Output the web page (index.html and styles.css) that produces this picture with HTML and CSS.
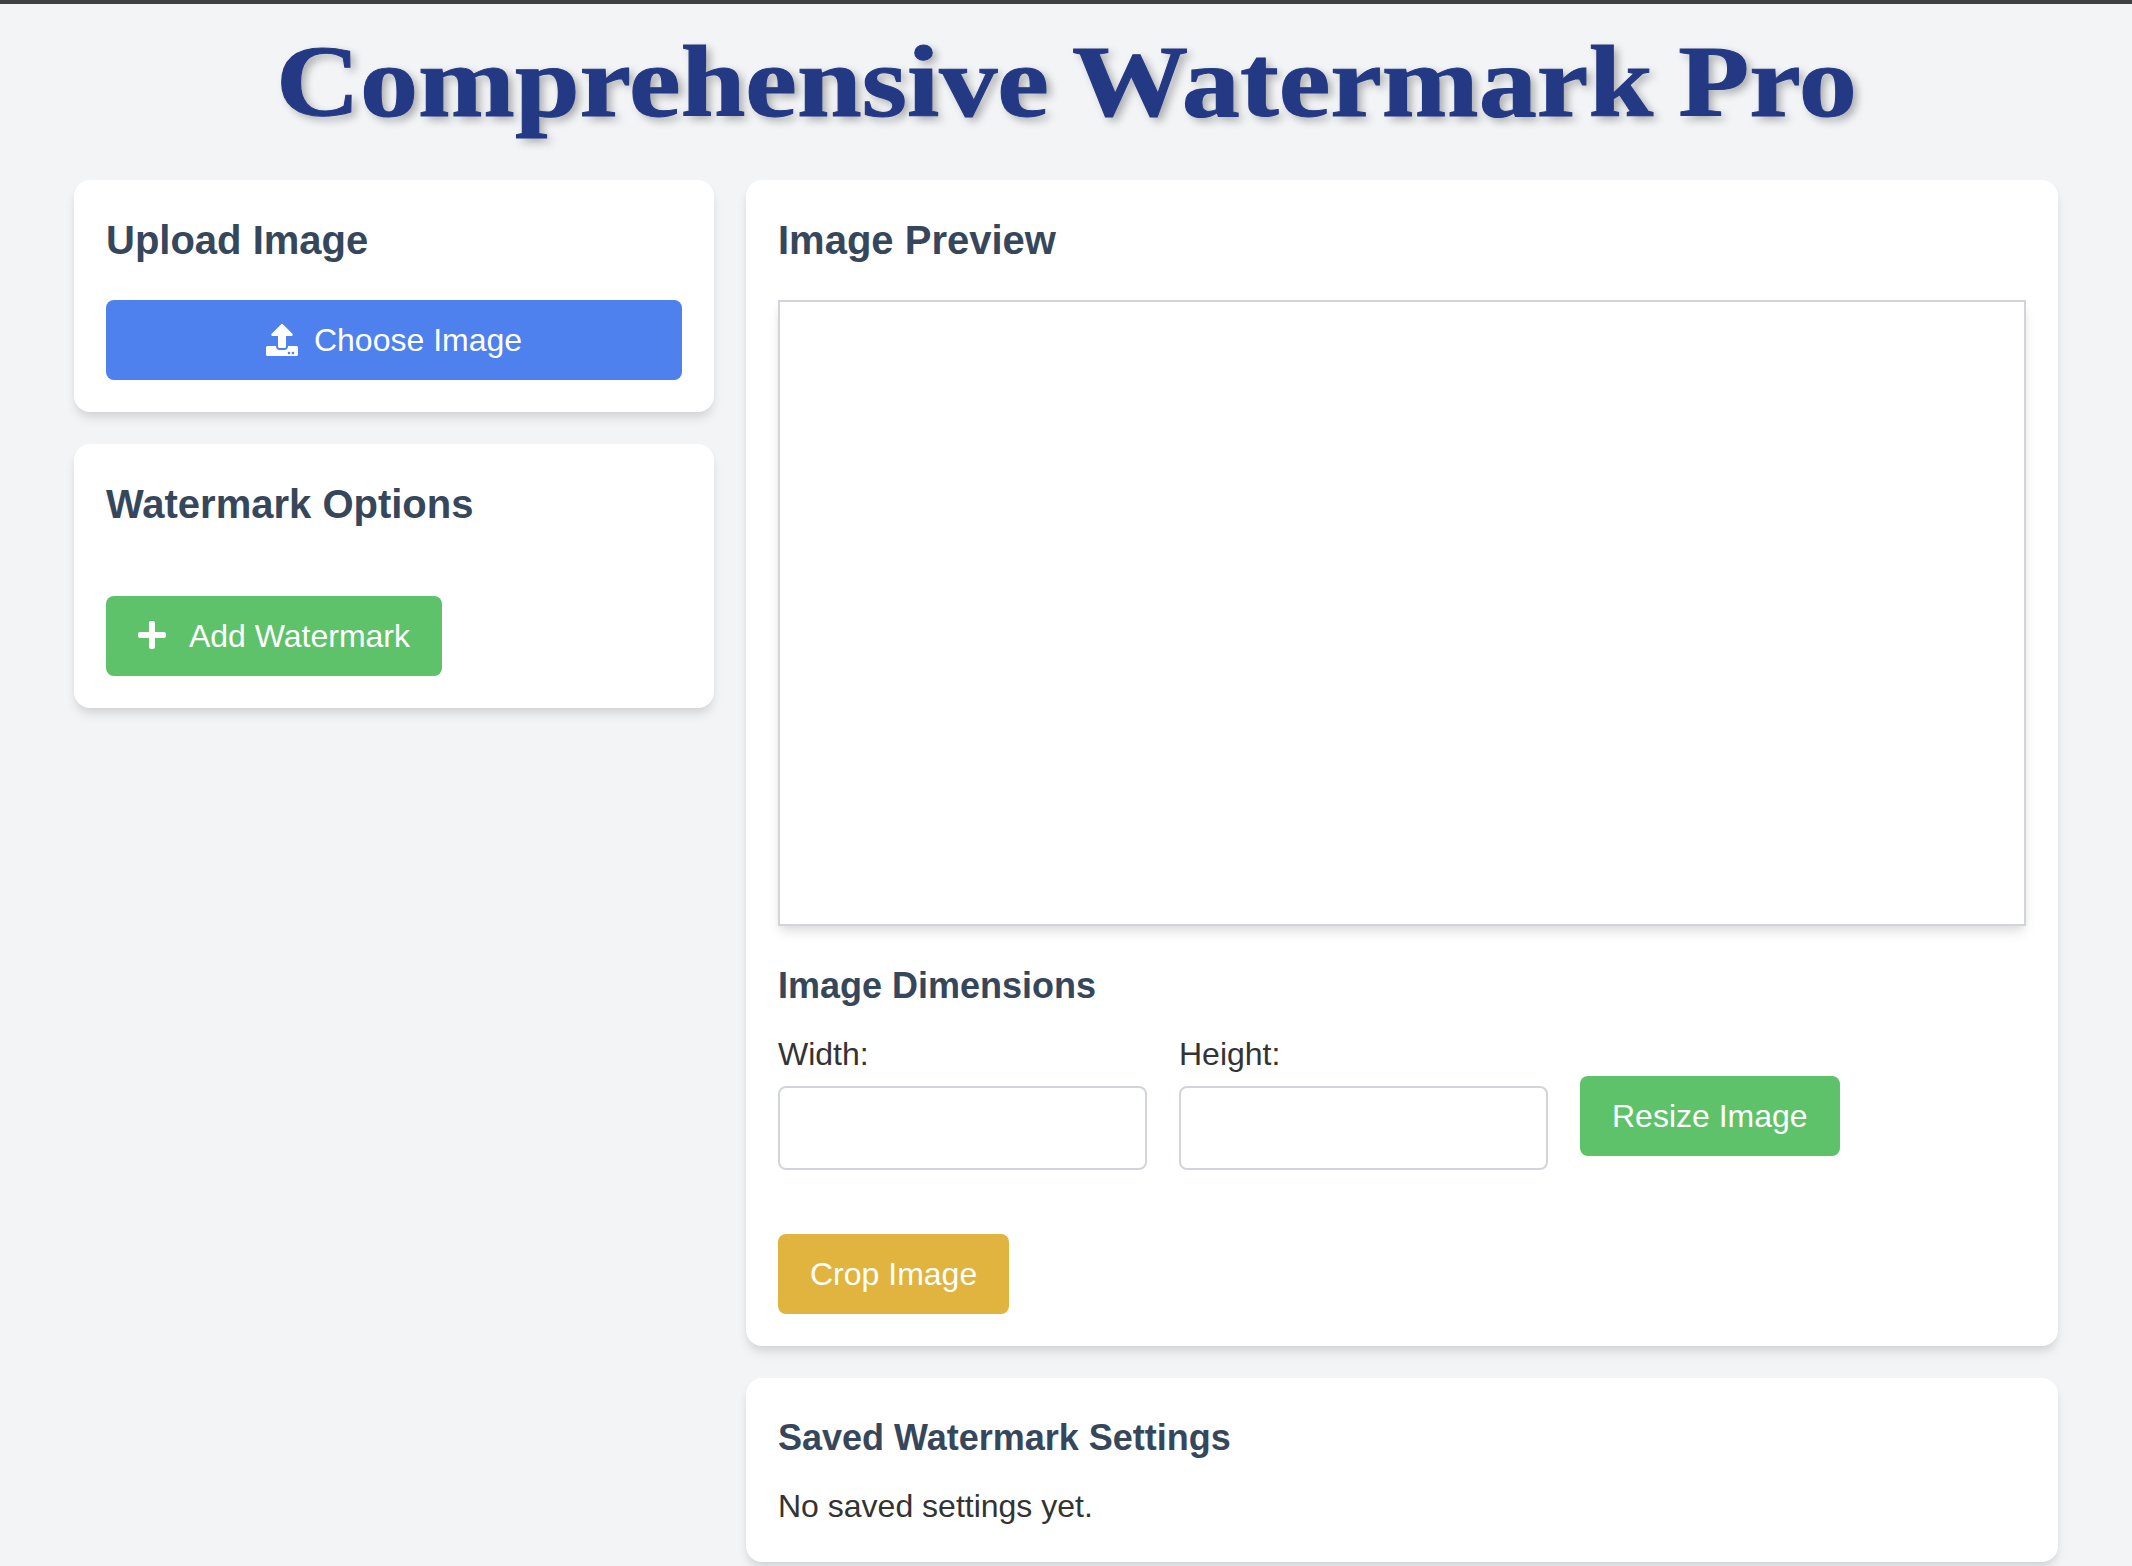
FILE: index.html
```html
<!DOCTYPE html>
<html lang="en">
<head>
<meta charset="utf-8">
<title>Comprehensive Watermark Pro</title>
<link rel="stylesheet" href="styles.css">
</head>
<body>
<header class="page-header">
  <h1 class="page-title">Comprehensive Watermark Pro</h1>
</header>
<main class="layout">
  <div class="column">
    <section class="card">
      <h2 class="heading">Upload Image</h2>
      <label class="btn btn-blue btn-block">
        <svg class="icon-upload" viewBox="0 0 512 512" fill="currentColor"><path d="M296 384h-80c-13.3 0-24-10.7-24-24V192h-87.7c-17.8 0-26.7-21.5-14.1-34.1L242.3 5.7c7.5-7.5 19.8-7.5 27.3 0l152.2 152.2c12.6 12.6 3.7 34.1-14.1 34.1H320v168c0 13.3-10.7 24-24 24zm216-8v112c0 13.3-10.7 24-24 24H24c-13.3 0-24-10.7-24-24V376c0-13.3 10.7-24 24-24h136v8c0 30.9 25.1 56 56 56h80c30.9 0 56-25.1 56-56v-8h136c13.3 0 24 10.7 24 24zm-124 88c0-11-9-20-20-20s-20 9-20 20 9 20 20 20 20-9 20-20zm64 0c0-11-9-20-20-20s-20 9-20 20 9 20 20 20 20-9 20-20z"/></svg>
        <span>Choose Image</span>
      </label>
    </section>
    <section class="card">
      <h2 class="heading">Watermark Options</h2>
      <button class="btn btn-green btn-add">
        <svg class="icon-plus" viewBox="0 0 448 512" fill="currentColor"><path d="M416 208H272V64c0-17.67-14.33-32-32-32h-32c-17.67 0-32 14.33-32 32v144H32c-17.67 0-32 14.33-32 32v32c0 17.67 14.33 32 32 32h144v144c0 17.67 14.33 32 32 32h32c17.67 0 32-14.33 32-32V304h144c17.67 0 32-14.33 32-32v-32c0-17.67-14.33-32-32-32z"/></svg>
        <span>Add Watermark</span>
      </button>
    </section>
  </div>
  <div class="column">
    <section class="card">
      <h2 class="heading">Image Preview</h2>
      <div class="preview"></div>
      <h3 class="subheading">Image Dimensions</h3>
      <div class="dimensions">
        <div class="field">
          <label for="width">Width:</label>
          <input class="input" id="width" type="text">
        </div>
        <div class="field">
          <label for="height">Height:</label>
          <input class="input" id="height" type="text">
        </div>
        <button class="btn btn-green btn-resize">Resize Image</button>
      </div>
      <button class="btn btn-yellow btn-crop">Crop Image</button>
    </section>
    <section class="card">
      <h3 class="subheading">Saved Watermark Settings</h3>
      <p class="note">No saved settings yet.</p>
    </section>
  </div>
</main>
</body>
</html>
```
FILE: styles.css
```css
* {
  box-sizing: border-box;
  margin: 0;
}

body {
  height: 1566px;
  overflow: hidden;
  background: #f3f4f6;
  border-top: 4px solid #3e4041;
  color: #333;
  font: 32px/48px "Liberation Sans", Arial, sans-serif;
}

.page-header {
  display: flex;
  justify-content: center;
  height: 176px;
  padding-top: 30px;
}

.page-title {
  color: #243984;
  font: bold 102px/96px "Liberation Serif", Georgia, serif;
  word-spacing: -3.5px;
  white-space: nowrap;
  -webkit-text-stroke: 1px #243984;
  text-shadow: 4px 4px 8px rgba(0, 0, 0, 0.3);
  transform: scaleX(1.14);
}

.layout {
  display: grid;
  grid-template-columns: 640px 1312px;
  gap: 32px;
  align-items: start;
  padding-left: 74px;
}

.column {
  display: grid;
  gap: 32px;
}

.card {
  padding: 32px;
  border-radius: 16px;
  background: #fff;
  box-shadow: 0 8px 12px -2px rgba(0, 0, 0, 0.1), 0 4px 8px -2px rgba(0, 0, 0, 0.06);
}

.heading {
  margin-bottom: 32px;
  color: #36475c;
  font-size: 40px;
  line-height: 56px;
}

.subheading {
  margin-bottom: 16px;
  color: #36475c;
  font-size: 36px;
  line-height: 56px;
}

.btn {
  display: flex;
  align-items: center;
  height: 80px;
  padding: 16px 32px;
  border: 0;
  border-radius: 8px;
  color: #fff;
  font: inherit;
  white-space: nowrap;
}

.btn-blue { background: #4e80ee; }
.btn-green { background: #5ec26a; }
.btn-yellow { background: #e0b43e; }

.btn-block {
  justify-content: center;
  gap: 16px;
}

.btn-add {
  gap: 23px;
  width: 336px;
  margin-top: 64px;
}

.icon-upload {
  width: 32px;
  height: 32px;
}

.icon-plus {
  width: 28px;
  height: 32px;
  margin-bottom: 2px;
}

.preview {
  height: 626px;
  margin-bottom: 32px;
  border: 2px solid #d1d5db;
  box-shadow: 0 8px 12px -2px rgba(0, 0, 0, 0.1), 0 4px 8px -2px rgba(0, 0, 0, 0.06);
}

.dimensions {
  display: flex;
  align-items: center;
  gap: 32px;
}

.field {
  display: grid;
  gap: 8px;
  width: 369px;
}

.input {
  width: 100%;
  height: 84px;
  padding: 16px;
  border: 2px solid #d1d5db;
  border-radius: 8px;
  background: #fff;
  font: inherit;
}

.btn-resize { margin-top: 32px; }
.btn-crop { margin-top: 64px; }
```
